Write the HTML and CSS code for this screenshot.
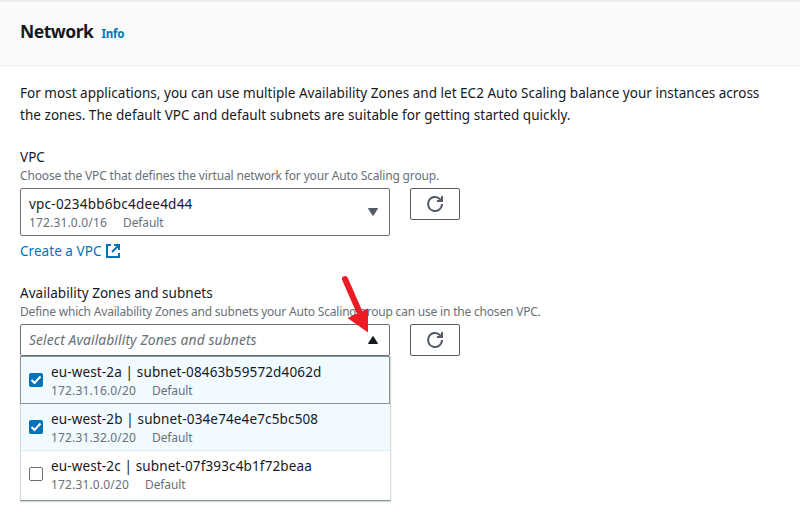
FILE: index.html
```html
<!DOCTYPE html>
<html lang="en">
<head>
<meta charset="utf-8">
<title>Network</title>
<link rel="stylesheet" href="styles.css">
</head>
<body>
<section class="panel">
  <header class="panel-header"><h2>Network</h2><a class="info">Info</a></header>
  <div class="panel-body">
    <p class="intro"><span class="line-one">For most applications, you can use multiple Availability Zones and let EC2 Auto Scaling balance your instances across</span><br><span class="line-two">the zones. The default VPC and default subnets are suitable for getting started quickly.</span></p>

    <div class="field">
      <div class="label">VPC</div>
      <div class="hint">Choose the VPC that defines the virtual network for your Auto Scaling group.</div>
      <div class="control">
        <div class="select select-tall">
          <div>
            <div class="name vpc-name">vpc-0234bb6bc4dee4d44</div>
            <div class="meta"><span>172.31.0.0/16</span><span>Default</span></div>
          </div>
          <svg class="caret" viewBox="0 0 12 10"><path d="M1.5 1.5h9L6 8.5z"/></svg>
        </div>
        <button class="refresh" aria-label="Refresh VPCs"><svg viewBox="0 0 16 16"><path d="M15 8a7 7 0 1 1-1.8-4.7L15 5"/><path d="M10 5h5V0"/></svg></button>
      </div>
      <a class="create"><span>Create a VPC</span><svg viewBox="0 0 16 16"><path d="M6 2H2v12h12v-4M9 2h5v5M7 9l6.5-6.5"/></svg></a>
    </div>

    <div class="field zones">
      <div class="label zones-label">Availability Zones and subnets</div>
      <div class="hint zones-hint">Define which Availability Zones and subnets your Auto Scaling group can use in the chosen VPC.</div>
      <div class="control">
        <div class="select">
          <span class="placeholder">Select Availability Zones and subnets</span>
          <svg class="caret open" viewBox="0 0 12 10"><path d="M1.5 8.5h9L6 1.5z"/></svg>
        </div>
        <button class="refresh" aria-label="Refresh subnets"><svg viewBox="0 0 16 16"><path d="M15 8a7 7 0 1 1-1.8-4.7L15 5"/><path d="M10 5h5V0"/></svg></button>
      </div>
      <div class="menu">
        <div class="option selected focused">
          <span class="box checked"><svg viewBox="0 0 14 14"><path d="M2.5 7l3 3 6-6.5"/></svg></span>
          <div><div class="name">eu-west-2a | subnet-08463b59572d4062d</div><div class="meta"><span>172.31.16.0/20</span><span>Default</span></div></div>
        </div>
        <div class="option selected">
          <span class="box checked"><svg viewBox="0 0 14 14"><path d="M2.5 7l3 3 6-6.5"/></svg></span>
          <div><div class="name">eu-west-2b | subnet-034e74e4e7c5bc508</div><div class="meta"><span>172.31.32.0/20</span><span>Default</span></div></div>
        </div>
        <div class="option last">
          <span class="box"></span>
          <div><div class="name">eu-west-2c | subnet-07f393c4b1f72beaa</div><div class="meta"><span>172.31.0.0/20</span><span>Default</span></div></div>
        </div>
      </div>
      <svg class="pointer" viewBox="0 0 32 60"><path d="M5 5L19 37" /><polygon points="7.5,44 28,34.5 28,58.5"/></svg>
    </div>
  </div>
</section>
</body>
</html>
```
FILE: styles.css
```css
* { box-sizing: border-box; }
body {
  margin: 0;
  height: 513px;
  overflow: hidden;
  background: #fff;
  color: #16191f;
  font: 14px/22px "Noto Sans", "Open Sans", sans-serif;
  white-space: nowrap;
}
.panel { border-top: 1px solid #eaeded; }
.panel-header {
  display: flex;
  align-items: baseline;
  gap: 8px;
  height: 65px;
  padding: 18px 20px 0;
  background: #fafafa;
  border-top: 1px solid #f0f0f0;
  border-bottom: 1px solid #eaeded;
}
h2 { margin: 0; font-size: 17.5px; line-height: 22px; font-weight: 700; letter-spacing: -0.5px; }
.info { color: #0073bb; font-size: 11.5px; font-weight: 700; letter-spacing: -0.2px; }
.panel-body { padding: 16px 20px; }
.intro { margin: 0 0 20px; font-size: 13.5px; letter-spacing: 0.02px; }
.line-two { letter-spacing: 0.04px; }
.label { font-size: 13.5px; letter-spacing: 0.04px; }
.hint { height: 20px; color: #687078; font-size: 12px; line-height: 16px; letter-spacing: -0.16px; }
.zones-hint { letter-spacing: -0.195px; }
.control { display: flex; align-items: flex-start; gap: 20px; }
.select {
  display: flex;
  align-items: center;
  justify-content: space-between;
  width: 370px;
  height: 32px;
  padding: 0 10px 0 8px;
  border: 1px solid #687078;
  border-radius: 2px;
}
.select-tall { height: 48px; }
.name { font-size: 13.5px; line-height: 22px; letter-spacing: 0.14px; }
.vpc-name { letter-spacing: 0.23px; }
.meta { display: flex; gap: 16px; color: #687078; font-size: 12px; line-height: 16px; letter-spacing: 0.16px; }
.meta span + span { letter-spacing: -0.1px; }
.caret { width: 12px; height: 10px; fill: #545b64; stroke: #545b64; stroke-linejoin: round; }
.caret.open { fill: #16191f; stroke: #16191f; }
.placeholder { color: #687078; font-size: 13.8px; font-style: italic; letter-spacing: 0.12px; }
.refresh {
  display: flex;
  align-items: center;
  justify-content: center;
  width: 50px;
  height: 32px;
  padding: 0;
  background: #fff;
  border: 1px solid #545b64;
  border-radius: 2px;
}
.refresh svg { width: 16px; height: 16px; fill: none; stroke: #545b64; stroke-width: 2; overflow: visible; }
.create { display: flex; align-items: center; gap: 3px; margin-top: 4px; color: #0073bb; font-size: 13.5px; letter-spacing: 0.05px; }
.create svg { width: 16px; height: 16px; fill: none; stroke: #0073bb; stroke-width: 2; }
.zones { position: relative; margin-top: 20px; }
.menu { width: 371px; background: #fff; border: 1px solid #d5dbdb; border-top: 0; border-bottom-color: #879596; box-shadow: 0 1px 1px #d5dbdb; }
.option { display: flex; align-items: center; gap: 8px; height: 47px; padding: 0 8px; border-bottom: 1px solid #e6ecef; }
.option.selected { background: #f1faff; }
.option.focused { height: 48px; padding: 0 8px 1px; border: 1px solid #879596; margin-left: -1px; }
.option.last { height: 49px; padding-bottom: 3px; border: 0; }
.box { width: 14px; height: 14px; border: 1px solid #687078; border-radius: 2px; }
.box.checked { background: #0073bb; border: 0; }
.box svg { display: block; width: 14px; height: 14px; fill: none; stroke: #fff; stroke-width: 2; }
.pointer { position: absolute; left: 320px; top: -8px; width: 32px; height: 60px; fill: #ed1c24; }
.pointer path { stroke: #ed1c24; stroke-width: 6; stroke-linecap: round; }
```
